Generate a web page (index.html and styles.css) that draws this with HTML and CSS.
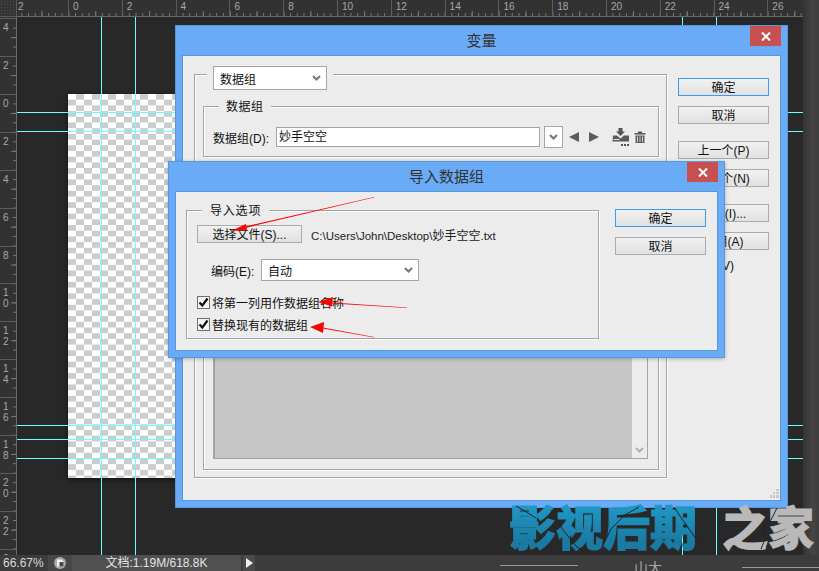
FILE: index.html
```html
<!DOCTYPE html>
<html lang="zh-CN">
<head>
<meta charset="utf-8">
<title>变量</title>
<link rel="stylesheet" href="styles.css">
</head>
<body>
<div class="app">
  <div class="corner"></div>
  <div class="ruler-top">
    <span class="rt">2</span><span class="rt">0</span><span class="rt">2</span><span class="rt">4</span><span class="rt">6</span><span class="rt">8</span><span class="rt">10</span><span class="rt">12</span><span class="rt">14</span><span class="rt">16</span><span class="rt">18</span><span class="rt">20</span><span class="rt">22</span><span class="rt">24</span><span class="rt">26</span>
  </div>
  <div class="side"></div>
  <div class="ruler-left">
    <span class="rl">4</span><span class="rl">2</span><span class="rl">0</span><span class="rl">2</span><span class="rl">4</span><span class="rl">6</span><span class="rl">8</span><span class="rl">10</span><span class="rl">12</span><span class="rl">14</span><span class="rl">16</span><span class="rl">18</span><span class="rl">20</span><span class="rl">22</span><span class="rl">24</span>
  </div>
  <div class="canvas">
    <div class="doc"></div>
    <i class="guide-v gv1"></i><i class="guide-v gv2"></i><i class="guide-v gv3"></i><i class="guide-v gv4"></i>
    <i class="guide-h gh1"></i><i class="guide-h gh2"></i><i class="guide-h gh3"></i><i class="guide-h gh4"></i><i class="guide-h gh5"></i>
  </div>
  <div class="status">
    <span class="zoom">66.67%</span>
    <span class="status-icon">
      <svg width="14" height="14" viewBox="0 0 14 14"><circle cx="7" cy="7" r="6" fill="#a8a8a8"/><path d="M4 3.500h4.500l2 2v5h-6.500z" fill="#f2f2f2"/><path d="M6.500 6h4v4.500h-4z" fill="#4a4a4a"/></svg>
    </span>
    <span class="doc-info">文档:1.19M/618.8K</span>
    <span class="status-arrow"><svg width="8" height="10" viewBox="0 0 8 10"><path d="M1 0l7 5-7 5z" fill="#eee"/></svg></span>
    <i class="stat-line sl1"></i>
    <span class="stat-text">山大</span>
    <i class="stat-line sl2"></i>
  </div>

  <section class="window win-main">
    <header class="titlebar">
      <h1 class="title">变量</h1>
      <span class="close"><svg width="10" height="9" viewBox="0 0 10 9"><path d="M1 .5l8 8M9 .5l-8 8" stroke="#fff" stroke-width="2" fill="none"/></svg></span>
    </header>
    <div class="client client-main">
      <div class="group group-outer">
        <div class="legend legend-select">
          <div class="select select-top"><span>数据组</span><svg class="chev" width="9" height="6" viewBox="0 0 9 6"><path d="M1 1l3.500 3.500L8 1" stroke="#777" stroke-width="2" fill="none"/></svg></div>
        </div>
        <div class="group group-data">
          <div class="legend legend-data">数据组</div>
          <div class="data-row">
            <label class="field-label">数据组(D):</label>
            <div class="input">妙手空空</div>
            <div class="drop"><svg width="9" height="6" viewBox="0 0 9 6"><path d="M1 1l3.500 3.500L8 1" stroke="#777" stroke-width="2" fill="none"/></svg></div>
            <svg class="nav nav-prev" width="10" height="10" viewBox="0 0 10 10"><path d="M10 0v10L0 5z" fill="#5c5c5c"/></svg>
            <svg class="nav nav-next" width="10" height="10" viewBox="0 0 10 10"><path d="M0 0v10l10-5z" fill="#5c5c5c"/></svg>
            <svg class="ico-import" width="18" height="18" viewBox="0 0 18 18"><path d="M6.500 0h4v3.500h2.500L8.500 8 4 3.500h2.500z" fill="#555"/><path d="M1 7.500h4l3.500 3 3.500-3h5v6H.5z" fill="#5c5c5c"/><path d="M1.500 11h6v1h-6z" fill="#ddd"/><path d="M9 16h2v2H9zM12 16h2v2h-2zM15 16h2v2h-2z" fill="#555"/></svg>
            <svg class="ico-trash" width="12" height="12" viewBox="0 0 12 12"><path d="M4 .5h4v1.500h3.500v1.500H.5V2H4z" fill="#555"/><path d="M1.500 4.500h9V12h-9z" fill="#5c5c5c"/><path d="M3.500 5.500v5.500M6 5.500v5.500M8.500 5.500v5.500" stroke="#ddd" stroke-width=".9"/></svg>
          </div>
        </div>
        <div class="group group-list">
          <div class="list">
            <div class="list-body"></div>
            <div class="list-scroll"><svg width="9" height="6" viewBox="0 0 9 6"><path d="M1 1l3.500 3.500L8 1" stroke="#b0b0b0" stroke-width="2" fill="none"/></svg></div>
          </div>
        </div>
      </div>
      <div class="btn-col btn-col-main">
        <button class="btn btn-default">确定</button>
        <button class="btn">取消</button>
        <button class="btn btn-gap">上一个(P)</button>
        <button class="btn">下一个(N)</button>
        <button class="btn btn-gap">导入(I)...</button>
        <button class="btn">应用(A)</button>
        <div class="preview">预览(V)</div>
      </div>
      <svg class="grip" width="9" height="9" viewBox="0 0 9 9"><path d="M6 0h3v2H6zM3 3h2v2H3zM6 3h3v2H6zM0 6h2v3H0zM3 6h2v3H3zM6 6h3v3H6z" fill="#c8c8c8"/></svg>
    </div>
  </section>

  <section class="window win-import">
    <header class="titlebar">
      <h1 class="title">导入数据组</h1>
      <span class="close"><svg width="10" height="9" viewBox="0 0 10 9"><path d="M1 .5l8 8M9 .5l-8 8" stroke="#fff" stroke-width="2" fill="none"/></svg></span>
    </header>
    <div class="client client-import">
      <div class="group group-options">
        <div class="legend legend-options">导入选项</div>
        <div class="file-row">
          <button class="btn btn-file">选择文件(S)...</button>
          <span class="path">C:\Users\John\Desktop\<span class="path-cjk">妙手空空</span>.txt</span>
        </div>
        <div class="enc-row">
          <label class="field-label">编码(E):</label>
          <div class="select select-enc"><span>自动</span><svg class="chev" width="9" height="6" viewBox="0 0 9 6"><path d="M1 1l3.500 3.500L8 1" stroke="#777" stroke-width="2" fill="none"/></svg></div>
        </div>
        <div class="check-row check-first">
          <span class="check"><svg width="11" height="11" viewBox="0 0 11 11"><path d="M1.500 5.500l2.800 3L9.500 1.500" stroke="#111" stroke-width="2.200" fill="none"/></svg></span>
          <span>将第一列用作数据组名称</span>
        </div>
        <div class="check-row check-second">
          <span class="check"><svg width="11" height="11" viewBox="0 0 11 11"><path d="M1.500 5.500l2.800 3L9.500 1.500" stroke="#111" stroke-width="2.200" fill="none"/></svg></span>
          <span>替换现有的数据组</span>
        </div>
      </div>
      <div class="btn-col btn-col-import">
        <button class="btn btn-default">确定</button>
        <button class="btn">取消</button>
      </div>
    </div>
  </section>

  <svg class="arrows" width="819" height="571" viewBox="0 0 819 571">
    <g fill="#f00" stroke="none">
      <path d="M374 197L245 226.500l.3 1.400L374 197.600z"/>
      <path d="M231 231l15-7 1 6z"/>
      <path d="M407 307.500L332 302.500v1L407 308z"/>
      <path d="M318 302l15-5 -1 9.500z"/>
      <path d="M374 337L323 327.500l-.2 1L374 337.500z"/>
      <path d="M310 327l14-5 -1 11z"/>
    </g>
  </svg>

  <div class="watermark">
    <span class="wm-blue">影视后期</span><span class="wm-gray">之家</span>
    <svg class="cracks" width="320" height="50" viewBox="0 0 320 50"><path d="M7 2l12 7 8 5M42 6l12 20 14 17 5 3M130 3l-14 8-14 14-8 16M165 3l8 12 12 17 6 8M268 4l-6 12-8 7 2 12-4 10M218 34l-8 4" stroke="#232323" stroke-width="1" fill="none"/></svg>
  </div>
</div>
</body>
</html>
```

FILE: styles.css
```css
* { box-sizing: border-box; }
html, body { margin: 0; padding: 0; background: #282828; }
body { font-family: "Liberation Sans", "Noto Sans CJK SC", sans-serif; font-size: 12px; color: #111; }

.app {
  position: relative;
  width: 819px;
  height: 571px;
  overflow: hidden;
  display: grid;
  grid-template-columns: 17px 786px 16px;
  grid-template-rows: 17px 538px 16px;
}

/* rulers */
.corner {
  background: #353535 radial-gradient(#4c4c4c 0.6px, transparent 0.7px) 0 0 / 3px 3px;
  border-right: 1px solid #5a5a5a;
  border-bottom: 1px solid #5a5a5a;
}
.ruler-top {
  display: flex;
  overflow: hidden;
  background-color: #323232;
  background-image:
    linear-gradient(to right, #777 1px, transparent 1px),
    linear-gradient(to right, #777 1px, transparent 1px),
    linear-gradient(#6a6a6a, #6a6a6a);
  background-size: 6.72px 3px, 26.9px 5px, 100% 1px;
  background-position: 4.3px 13px, 24.5px 11px, 0 16px;
  background-repeat: repeat-x, repeat-x, no-repeat;
}
.rt {
  flex: 0 0 53.8px;
  height: 17px;
  padding: 2px 0 0 4px;
  border-left: 1px solid #5c5c5c;
  font-size: 10px;
  line-height: 10px;
  color: #a8a8a8;
}
.rt:first-child { flex-basis: 51px; border-left: 0; padding-left: 1px; }
.ruler-left {
  display: flex;
  flex-direction: column;
  overflow: hidden;
  padding-top: 1.2px;
  background-color: #323232;
  background-image:
    linear-gradient(#777 1px, transparent 1px),
    linear-gradient(#777 1px, transparent 1px),
    linear-gradient(#6a6a6a, #6a6a6a);
  background-size: 3px 9.48px, 5px 37.9px, 1px 100%;
  background-position: 13px 1.2px, 11px 20.2px, 16px 0;
  background-repeat: repeat-y, repeat-y, no-repeat;
}
.rl {
  flex: 0 0 37.9px;
  width: 16px;
  padding: 3px 7px 0 3px;
  border-top: 1px solid #5c5c5c;
  font-size: 10px;
  line-height: 11px;
  color: #a8a8a8;
  word-break: break-all;
}
.side {
  grid-column: 3;
  grid-row: 1 / span 2;
  background: linear-gradient(to right, #343434, #454545 60%, #3d3d3d);
}

/* canvas */
.canvas {
  position: relative;
  background: #282828;
  overflow: hidden;
}
.doc {
  position: absolute;
  left: 51px;
  top: 77px;
  width: 680px;
  height: 384px;
  background-color: #fff;
  background-image: conic-gradient(#ccc 25%, #fff 25% 50%, #ccc 50% 75%, #fff 75%);
  background-size: 16px 11.4px;
  box-shadow: 0 2px 5px rgba(0, 0, 0, .55);
}
.guide-v, .guide-h { position: absolute; background: #69ffff; }
.guide-v { top: 0; bottom: 0; width: 1px; }
.guide-h { left: 0; right: 0; height: 1px; }
.gv1 { left: 84px; }
.gv2 { left: 118px; }
.gv3 { left: 665px; }
.gv4 { left: 699px; }
.gh1 { top: 95px; }
.gh2 { top: 114px; }
.gh3 { top: 408px; }
.gh4 { top: 422px; }
.gh5 { top: 441px; }

/* status */
.status {
  grid-column: 1 / span 3;
  position: relative;
  display: flex;
  align-items: stretch;
  background: #3c3c3c;
  color: #ddd;
  line-height: 16px;
}
.zoom { flex: 0 0 48px; padding-left: 3px; color: #d8d8d8; }
.status-icon { flex: 0 0 24px; display: flex; align-items: center; justify-content: center; background: #474747; }
.doc-info { flex: 0 0 169px; text-align: center; background: #505050; color: #e4e4e4; }
.status-arrow { flex: 0 0 12px; margin-left: 2px; display: flex; align-items: center; justify-content: center; background: #4a4a4a; }
.stat-line { position: absolute; height: 1px; background: #9a9a9a; }
.sl1 { left: 500px; width: 78px; top: 10px; }
.sl2 { left: 742px; width: 77px; top: 12px; }
.stat-text { position: absolute; left: 634px; top: 5px; font-size: 14px; color: #a8a8a8; }

/* windows */
.window {
  position: absolute;
  display: flex;
  flex-direction: column;
  padding: 0 6px 6px;
  background: #69abf6;
  border: 1px solid #5a97d9;
}
.win-main { left: 175px; top: 25px; width: 613px; height: 483px; }
.win-import { left: 168px; top: 161px; width: 557px; height: 197px; box-shadow: 0 1px 4px rgba(0, 0, 0, .25); }
.titlebar {
  position: relative;
  flex: 0 0 29px;
  display: flex;
  justify-content: center;
  align-items: center;
}
.title { margin: 0 0 2px; font-size: 15px; font-weight: 400; color: #333; }
.close {
  position: absolute;
  right: 0;
  top: 0;
  width: 31px;
  height: 20px;
  display: flex;
  align-items: center;
  justify-content: center;
  background: #c75050;
}
.client {
  flex: 1;
  position: relative;
  display: flex;
  align-items: flex-start;
  background: #ececec;
  border: 1px solid #5a97d9;
}
.client-main { padding: 18px 0 0 11px; }
.client-import { padding: 18px 0 0 10px; }

/* groups */
.group {
  border: 1px solid #a5a5a5;
  box-shadow: 1px 1px 0 #fff, inset 1px 1px 0 #fff;
}
.legend { width: fit-content; background: #ececec; }
.group-outer { width: 473px; height: 404px; flex: none; }
.legend-select { margin: -9px 0 0 12px; padding: 0 6px; }
.select {
  display: flex;
  align-items: center;
  justify-content: space-between;
  background: #fff;
  border: 1px solid #a5a5a5;
  padding: 0 5px 0 6px;
}
.select-top { width: 114px; height: 24px; }
.group-data { width: 456px; height: 51px; margin: 16px 0 0 8px; }
.legend-data { margin: -7px 0 0 15px; padding: 0 7px; height: 14px; line-height: 14px; letter-spacing: .5px; }
.data-row { display: flex; align-items: center; height: 22px; margin: 12px 0 0 9px; }
.field-label { flex: none; white-space: nowrap; }
.data-row .field-label { width: 63px; }
.input { flex: none; width: 264px; height: 20px; line-height: 18px; padding-left: 2px; background: #fff; border: 1px solid #a5a5a5; }
.drop { flex: none; width: 19px; height: 22px; margin-left: 4px; display: flex; align-items: center; justify-content: center; background: #fff; border: 1px solid #a5a5a5; }
.nav-prev { margin-left: 6px; }
.nav-next { margin-left: 10px; }
.ico-import { margin-left: 13px; }
.ico-trash { margin-left: 4px; }
.group-list { width: 456px; height: 302px; margin: 11px 0 0 8px; }
.list { display: flex; width: 435px; height: 278px; margin: 12px 0 0 9px; }
.list-body { flex: 1; background: #c6c6c6; border-left: 2px solid #a3a3a3; border-bottom: 1px solid #a3a3a3; }
.list-scroll { flex: 0 0 16px; display: flex; align-items: flex-end; justify-content: center; padding-bottom: 5px; background: #ececec; border-right: 1px solid #a5a5a5; border-bottom: 1px solid #a5a5a5; }

/* buttons */
.btn-col { flex: none; width: 91px; display: flex; flex-direction: column; gap: 10px; }
.btn-col-main { margin: 4px 0 0 11px; }
.btn-col-import { margin: -1px 0 0 16px; }
.btn {
  height: 18px;
  padding: 2px 0 0;
  font: inherit;
  line-height: 14px;
  color: #111;
  background: linear-gradient(#f1f1f1, #e1e1e1);
  border: 1px solid #ababab;
}
.btn-default { border-color: #3f9bf0; }
.btn-gap { margin-top: 7px; }
.preview { margin: -2px 0 0 16px; line-height: 16px; }
.grip { position: absolute; right: 1px; bottom: 2px; }

/* import dialog */
.group-options { width: 413px; height: 129px; flex: none; }
.legend-options { margin: -7px 0 0 15px; padding: 0 8px; height: 14px; line-height: 14px; letter-spacing: .8px; }
.file-row { display: flex; align-items: center; margin: 7px 0 0 10px; }
.btn-file { flex: none; width: 105px; }
.path { margin-left: 9px; white-space: nowrap; font-size: 11.5px; color: #222; }
.path-cjk { font-size: 12px; }
.enc-row { display: flex; align-items: center; margin: 16px 0 0 24px; }
.enc-row .field-label { width: 50px; }
.select-enc { width: 158px; height: 22px; }
.check-row { display: flex; align-items: center; gap: 2px; height: 13px; margin-left: 10px; }
.check-first { margin-top: 15px; }
.check-second { margin-top: 9px; }
.check {
  flex: none;
  width: 13px;
  height: 13px;
  display: flex;
  align-items: center;
  justify-content: center;
  background: #f4f4f4;
  border: 1px solid #707070;
}

/* overlays */
.arrows { position: absolute; left: 0; top: 0; pointer-events: none; }
.watermark {
  position: absolute;
  left: 509px;
  top: 492px;
  display: flex;
  font-size: 47px;
  line-height: 66px;
  font-weight: 900;
  font-family: "Noto Sans CJK SC", sans-serif;
  white-space: nowrap;
  pointer-events: none;
}
.wm-blue {
  width: 214px;
  color: transparent;
  background: linear-gradient(#1f96c4 25%, #1a7aa2 75%);
  -webkit-background-clip: text;
  background-clip: text;
  -webkit-text-stroke: 1.2px transparent;
}
.wm-gray { margin-left: -1px; color: #b9b9b9; font-size: 46px; -webkit-text-stroke: 1px #b9b9b9; }
.cracks { position: absolute; left: 0; top: 12px; }
```
